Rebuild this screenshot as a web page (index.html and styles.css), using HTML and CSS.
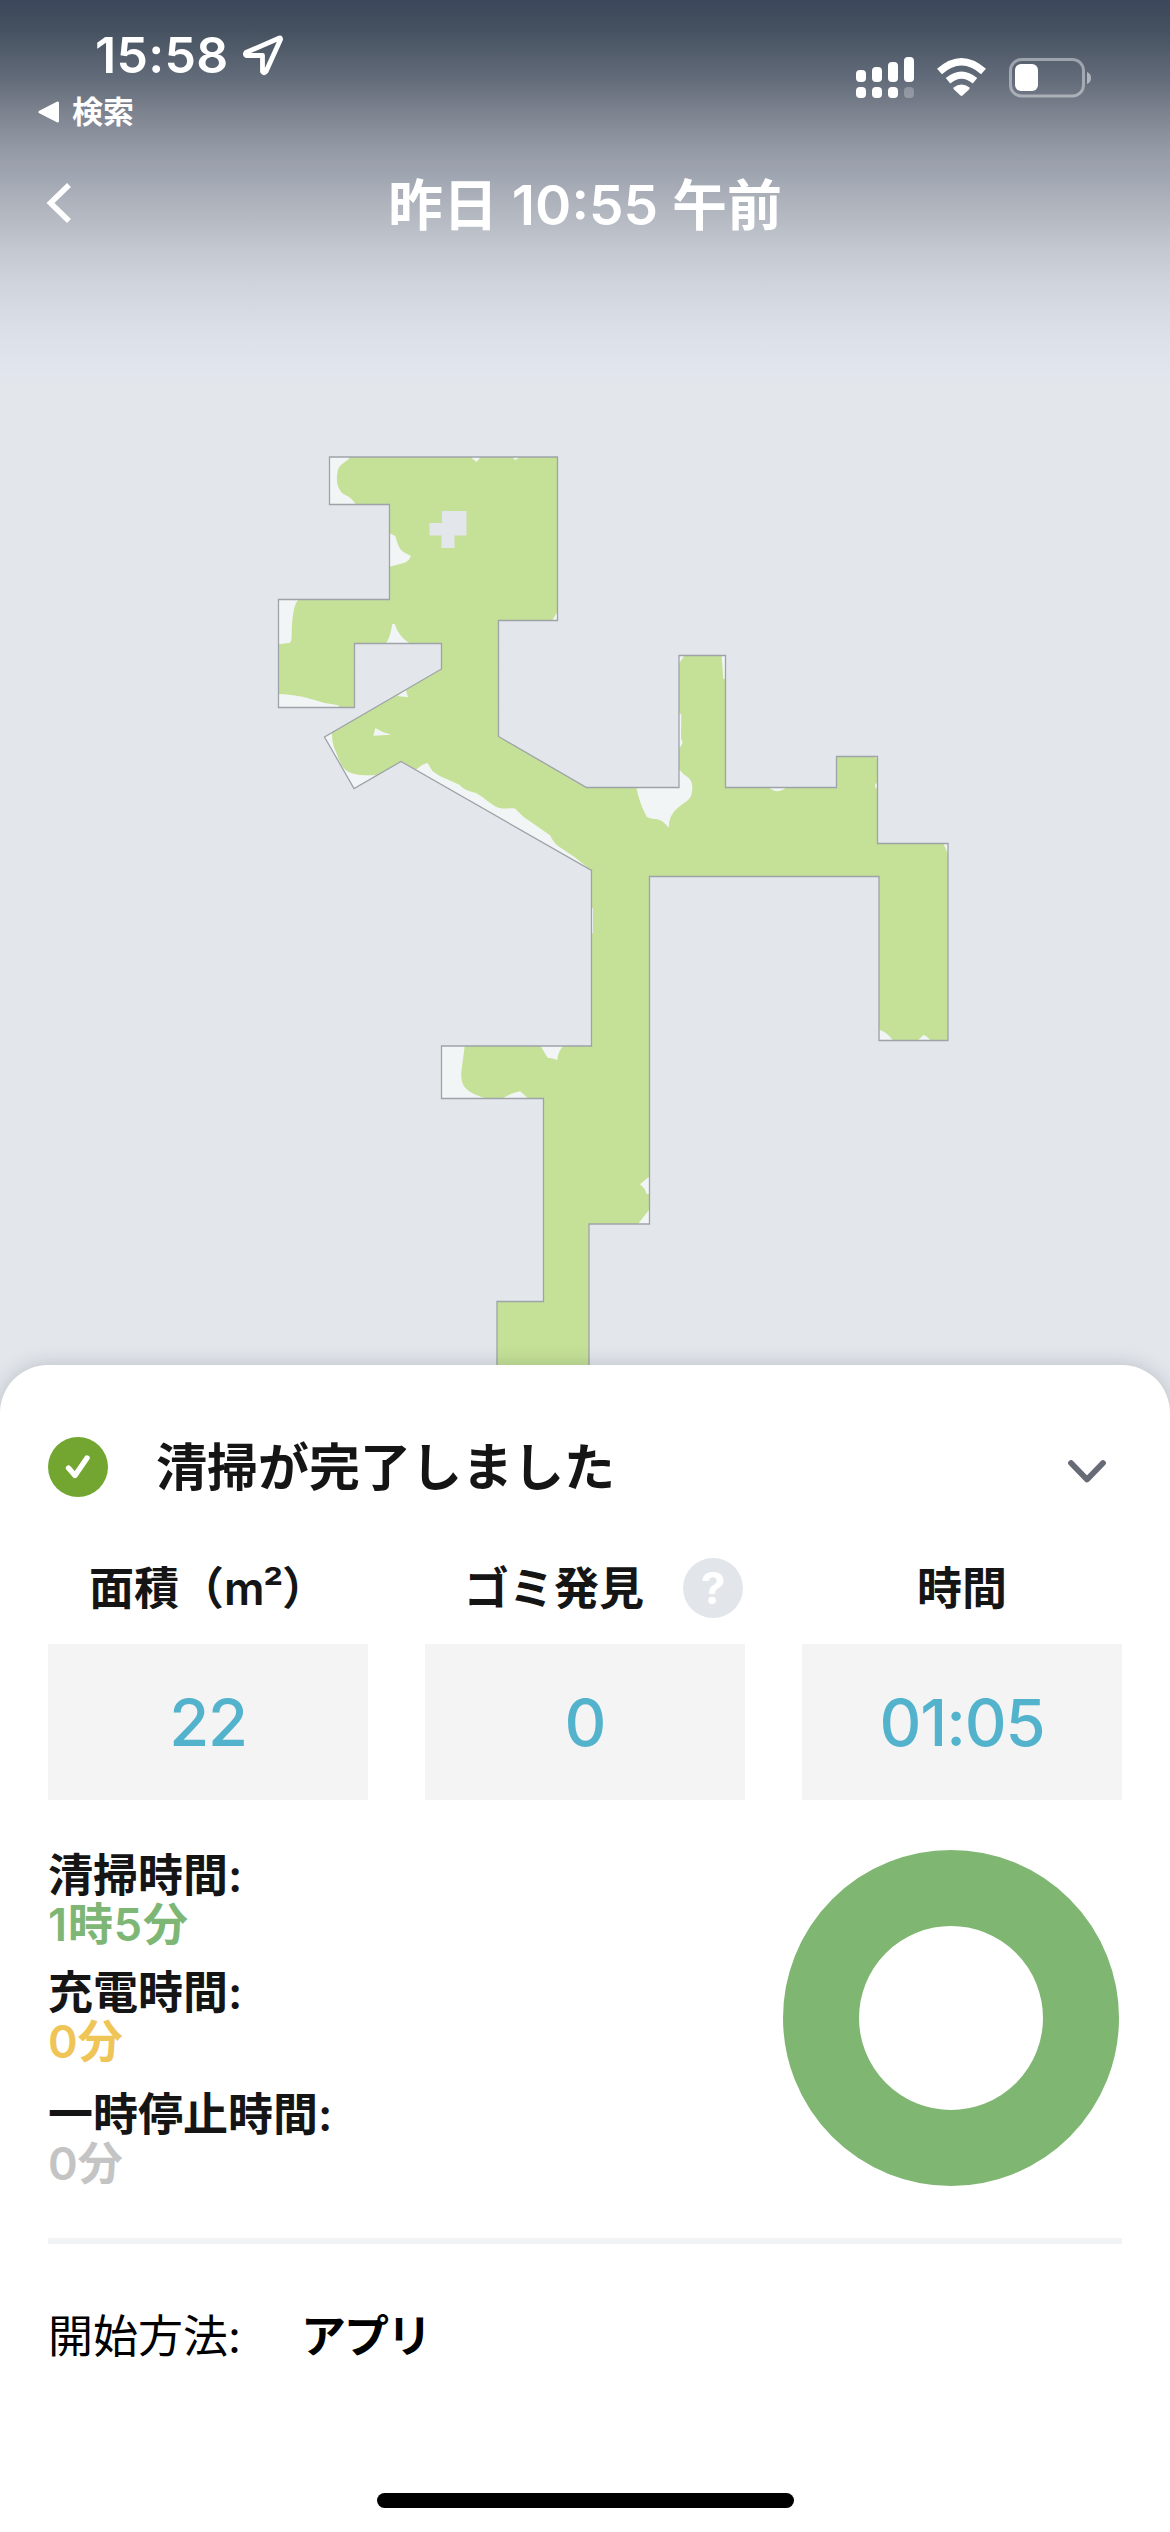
FILE: index.html
```html
<!DOCTYPE html>
<html lang="ja">
<head>
<meta charset="utf-8">
<title>清掃履歴</title>
<link rel="stylesheet" href="styles.css">
</head>
<body>
<header class="header">
  <div class="status">
    <div class="status-left">
      <div class="clock">
        <span class="time">15:58</span>
        <svg class="location" width="42" height="42" viewBox="0 0 42 42"><path d="M37.500 4 4 18.500Q2.500 20.500 4.500 21.500L20.500 21.500 20.500 37.500Q22 40 24 37.500L38.500 5.500Q38.800 3.800 37.500 4Z" fill="none" stroke="#fff" stroke-width="4.800" stroke-linejoin="round"/></svg>
      </div>
      <div class="return">
        <svg width="22" height="22" viewBox="0 0 22 22"><path d="M2 11 19.500 2V20Z" fill="#fff" stroke="#fff" stroke-width="3" stroke-linejoin="round"/></svg>
        <span>検索</span>
      </div>
    </div>
    <svg class="indicators" width="240" height="46" viewBox="854 54 240 46">
      <g fill="#fff">
        <rect x="856" y="70" width="10" height="12" rx="4"/><rect x="872" y="67" width="10" height="15" rx="4"/><rect x="888" y="62" width="10" height="20" rx="4"/><rect x="904" y="57" width="10" height="25" rx="4"/>
        <rect x="856" y="87" width="10" height="11" rx="4"/><rect x="872" y="87" width="10" height="11" rx="4"/><rect x="888" y="87" width="10" height="11" rx="4"/><rect x="904" y="87" width="10" height="11" rx="4" opacity=".25"/>
        <path d="M953.500 87.500Q961.500 81.500 969.500 87.500 970 88.500 969 89.500L962.500 95.500Q961.500 96.300 960.500 95.500L954 89.500Q953 88.500 953.500 87.500Z"/>
        <rect x="1015" y="64" width="23" height="27" rx="6"/>
        <path d="M1087 72Q1091 73.500 1091 78T1087 84Z" opacity=".5"/>
      </g>
      <g fill="none" stroke="#fff">
        <path d="M939.500 71.500Q961.500 52 983.500 71.500" stroke-width="7.400"/>
        <path d="M948 80.800Q961.500 69.500 975 80.800" stroke-width="7"/>
        <rect x="1010.500" y="59.500" width="73" height="36.500" rx="11" stroke-width="3" opacity=".42"/>
      </g>
    </svg>
  </div>
  <nav class="nav">
    <svg class="back" width="26" height="42" viewBox="0 0 26 42"><path d="M23 3 4.500 21 23 39" fill="none" stroke="#fff" stroke-width="5.600"/></svg>
    <h1>昨日 10:55 午前</h1>
  </nav>
</header>

<svg class="map" width="1170" height="965" viewBox="0 400 1170 965">
  <defs>
    <path id="floor" d="M329.500 457H557.500V620.500H498.500V736.500L586.500 787.500H679V655.500H725.500V787.500H836.500V756.500H877.500V843.500H948V1040.500H879V876.500H649.500V1224H589V1370H497V1301.500H543.500V1098.500H441.500V1046H591.500V870.500L401 761.500 354 788.500 324.500 737 441.500 669V643.500H354.500V707.500H278.500V599.500H389.500V504.500H329.500Z"/>
    <clipPath id="inside"><use href="#floor"/></clipPath>
  </defs>
  <use href="#floor" fill="#c5e197"/>
  <g clip-path="url(#inside)" fill="#f2f5f6">
    <g transform="translate(260 430) scale(.33333)">
      <path d="M208 80H270C266 94 240 98 234 120 226 148 232 178 250 192Q276 202 288 224H208ZM630 80H662L650 96ZM756 80H780L766 91ZM389 310 406 318C412 340 418 358 430 366L452 377Q450 390 434 398L389 410ZM55 507H118C100 520 98 560 95 600Q96 634 90 638L55 643ZM55 792C90 793 120 798 150 806Q190 820 236 826V834H55ZM378 640Q390 625 397 582H404Q415 618 448 640ZM892 546 876 572H892ZM412 798 438 780 444 802ZM346 894 368 906 394 914 340 917ZM192 920 216 908Q215 940 228 966 236 990 244 1004C262 1034 290 1036 350 1036L282 1078Z"/>
    </g>
    <g transform="translate(420 600) scale(.33333)">
      <path d="M-20 515 5 496 22 488 38 514Q58 530 78 536L118 554Q134 572 166 578C192 590 210 614 238 624 255 628 273 622 286 626L310 650Q354 680 390 706 402 730 414 738L462 770 515 812-20 530ZM776 166H794L776 192ZM905 166 910 236H918V166ZM776 336 784 345 783 415 788 428 776 450ZM649 562C655 590 662 615 680 650 692 658 712 656 720 660Q738 670 746 684 747 645 772 625C792 605 812 604 816 575Q820 546 806 534 788 522 776 506V562ZM512 924H519V1000H512Z"/>
    </g>
    <g transform="translate(640 630) scale(.33333)">
      <path d="M386 472Q400 484 412 484 425 484 440 472ZM702 380H714V388ZM714 456Q698 466 710 476H714ZM910 640 925 675V640ZM718 1199Q744 1208 760 1233H718ZM832 1233 850 1215Q862 1218 873 1233Z"/>
    </g>
    <g transform="translate(420 1020) scale(.33333)">
      <path d="M64 78H134L126 140Q118 184 137 205 153 223 200 236H64ZM362 78Q374 100 383 113 398 114 412 120 414 94 430 78ZM248 235Q275 218 300 214 310 222 324 235ZM690 468 660 493Q675 504 680 522H690ZM690 566 654 612H690Z"/>
    </g>
  </g>
  <path d="M442 511H466.500V535.500H454.500V548H441.500V535.500H429.500V523H442Z" fill="#e3e7ec"/>
  <use href="#floor" fill="none" stroke="#9ea3a9" stroke-width="1.300"/>
</svg>

<main class="sheet">
  <section class="summary">
    <svg width="60" height="60" viewBox="0 0 60 60"><circle cx="30" cy="30" r="30" fill="#72a630"/><path d="M20.500 31 27 38.500 39 21" fill="none" stroke="#fff" stroke-width="5.400" stroke-linecap="round" stroke-linejoin="round"/></svg>
    <h2>清掃が完了しました</h2>
    <svg class="toggle" width="40" height="26" viewBox="0 0 40 26"><path d="M4 4 20 20.500 36 4" fill="none" stroke="#666b75" stroke-width="5.800" stroke-linecap="round" stroke-linejoin="round"/></svg>
  </section>

  <section class="stats">
    <div class="stat"><div class="stat-label"><span>面積（<i class="unit">m²</i>）</span></div><div class="stat-value">22</div></div>
    <div class="stat"><div class="stat-label"><span>ゴミ発見</span><b class="help">?</b></div><div class="stat-value">0</div></div>
    <div class="stat"><div class="stat-label"><span>時間</span></div><div class="stat-value">01:05</div></div>
  </section>

  <section class="breakdown">
    <dl class="durations">
      <div><dt>清掃時間:</dt><dd class="clean">1時5分</dd></div>
      <div><dt>充電時間:</dt><dd class="charge">0分</dd></div>
      <div><dt>一時停止時間:</dt><dd class="pause">0分</dd></div>
    </dl>
    <svg class="donut" width="336" height="336" viewBox="0 0 336 336"><circle cx="168" cy="168" r="130" fill="none" stroke="#7fb672" stroke-width="76"/></svg>
  </section>

  <section class="method"><span>開始方法:</span><strong>アプリ</strong></section>
  <div class="home-indicator"></div>
</main>
</body>
</html>
```
FILE: styles.css
```css
* { box-sizing: border-box; }

body {
  margin: 0;
  width: 1170px;
  height: 2532px;
  overflow: hidden;
  display: flex;
  flex-direction: column;
  background: #e3e7ec;
  font-family: Inter, "Noto Sans CJK JP", sans-serif;
  color: #151515;
}

h1, h2, dl, dd { margin: 0; }
svg { display: block; flex: none; }

.header {
  height: 400px;
  flex: none;
  color: #fff;
  background: linear-gradient(#3d465b 0, #44505f 27px, #636c7a 80px, #7b818d 110px, #949aa6 150px, #acb1bb 200px, #c2c6cd 245px, #d0d4dd 285px, #dbdfe8 330px, #e1e5ed 370px, #e3e7ec 385px);
}

.status {
  height: 150px;
  display: flex;
  justify-content: space-between;
  padding: 0 76px 0 38px;
}
.clock { display: flex; align-items: center; gap: 14px; padding: 34px 0 0 57px; height: 76px; }
.time { font-size: 50px; font-weight: 600; line-height: 42px; width: 133px; letter-spacing: .3px; white-space: nowrap; }
.return { display: flex; align-items: center; gap: 12px; margin-top: 16px; height: 40px; font-size: 31px; font-weight: 600; line-height: 40px; }
.indicators { margin-top: 54px; }

.nav {
  display: grid;
  grid-template-columns: 130px 1fr 130px;
  align-items: center;
  height: 106px;
}
.back { margin-left: 46px; }
.nav h1 { padding-top: 3px; text-align: center; font-size: 55px; font-weight: 600; line-height: 70px; white-space: nowrap; }

.map { margin-bottom: -48px; }

.sheet {
  position: relative;
  flex: none;
  margin-top: 48px;
  height: 1167px;
  padding: 72px 48px 0;
  border-radius: 48px 48px 0 0;
  background: #fff;
  box-shadow: 0 0 20px rgba(40, 45, 60, .22);
}

.summary { display: flex; align-items: center; height: 60px; }
.summary h2 { margin-left: 48px; padding-top: 2px; font-size: 51px; font-weight: 600; line-height: 60px; }
.toggle { margin: 10px 15px 0 auto; }

.stats { display: grid; grid-template-columns: repeat(3, 320px); justify-content: space-between; margin-top: 61px; }
.stat-label { display: flex; align-items: center; height: 60px; font-size: 45px; font-weight: 600; line-height: 60px; }
.stat-label span { flex: 1; padding-top: 2px; text-align: center; white-space: nowrap; }
.unit { font-style: normal; letter-spacing: -1.5px; }
.help { width: 60px; height: 60px; margin-right: 2px; border-radius: 50%; background: #e2e6eb; color: #fff; font-size: 44px; font-weight: 700; text-align: center; }
.stat-value { height: 156px; margin-top: 26px; background: #f4f4f4; color: #53b3cd; font-size: 65px; font-weight: 500; line-height: 158px; letter-spacing: -1.2px; text-align: center; }

.breakdown {
  display: flex;
  justify-content: space-between;
  height: 444px;
  padding: 50px 3px 0 0;
  border-bottom: 6px solid #f1f3f4;
}
.durations { padding-top: 1px; font-size: 45px; font-weight: 600; line-height: 49px; }
.durations > div { height: 117px; }
.durations > div + div + div { padding-top: 5px; }
.clean { color: #7eb676; letter-spacing: .9px; }
.charge { color: #f0c557; }
.pause { color: #c4c4c4; }

.method { display: flex; gap: 60px; margin-top: 63px; font-size: 45px; line-height: 60px; color: #000; }
.method strong { font-weight: 700; letter-spacing: -2px; }

.home-indicator { width: 417px; height: 15px; margin: 126px auto 0; border-radius: 8px; background: #000; }
```
